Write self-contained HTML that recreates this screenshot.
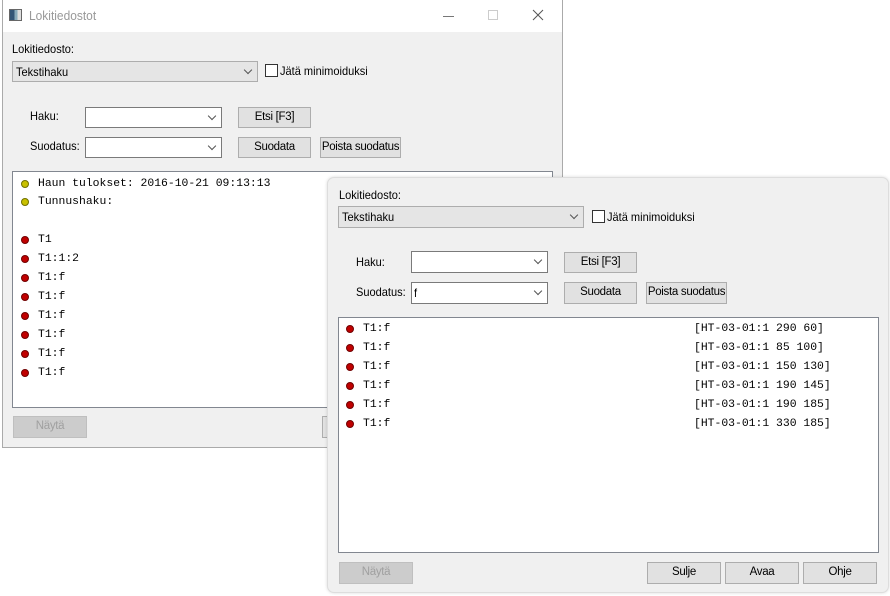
<!DOCTYPE html><html><head><style>
*{margin:0;padding:0;box-sizing:border-box}
body{width:890px;height:596px;background:#fff;position:relative;overflow:hidden;font-family:"Liberation Sans",sans-serif;font-size:12px;color:#000}
.a{position:absolute}
.t{position:absolute;white-space:nowrap;line-height:14px;transform:scaleX(.92);transform-origin:left}
.cb{position:absolute;background:#e5e5e5;border:1px solid #adadad}
.ed{position:absolute;background:#fff;border:1px solid #7a7a7a}
.btn{position:absolute;background:#e1e1e1;border:1px solid #adadad;text-align:center;line-height:19px;white-space:nowrap;font-size:11.5px;letter-spacing:-.3px}
.dis{background:#ccc;border-color:#bfbfbf;color:#a0a0a0}
.chev{position:absolute;right:6px;top:5px;width:6px;height:6px;border-right:1px solid #555;border-bottom:1px solid #555;transform:rotate(45deg)}
.chk{position:absolute;width:13px;height:13px;border:1px solid #333;background:#fff}
.m{position:absolute;font-family:"Liberation Mono",monospace;font-size:11.4px;white-space:pre;line-height:14px}
.dy,.dr{position:absolute;width:8px;height:8px;border-radius:50%}
.dy{background:#c8c000;border:1px solid #707000}
.dr{background:#c00000;border:1px solid #700000}
</style></head><body>
<!-- window 1 -->
<div class="a" style="left:2px;top:0;width:561px;height:448px;background:#f0f0f0;border:1px solid #aaa"></div>
<div class="a" style="left:3px;top:0;width:559px;height:32px;background:#fff"></div>
<div class="a" style="left:9px;top:9px;width:13px;height:12px;border:1px solid #666;background:linear-gradient(90deg,#357 0 40%,#8ab 40% 70%,#ddd 70%)"></div>
<div class="t" style="left:29px;top:9px;color:#999;font-size:13px">Lokitiedostot</div>
<div class="a" style="left:443px;top:16px;width:11px;height:1px;background:#777"></div>
<div class="a" style="left:488px;top:10px;width:10px;height:10px;border:1px solid #ccc"></div>
<svg class="a" style="left:532px;top:9px" width="12" height="12"><path d="M1 1L11 11M11 1L1 11" stroke="#555" stroke-width="1"/></svg>
<div class="t" style="left:12px;top:42px">Lokitiedosto:</div>
<div class="cb" style="left:12px;top:61px;width:246px;height:21px"><div class="t" style="left:3px;top:3px">Tekstihaku</div><div class="chev"></div></div>
<div class="chk" style="left:265px;top:64px"></div><div class="t" style="left:280px;top:64px">Jätä minimoiduksi</div>
<div class="t" style="left:30px;top:109px">Haku:</div>
<div class="ed" style="left:85px;top:107px;width:137px;height:21px"><div class="chev"></div></div>
<div class="btn" style="left:238px;top:107px;width:73px;height:21px">Etsi [F3]</div>
<div class="t" style="left:30px;top:139px">Suodatus:</div>
<div class="ed" style="left:85px;top:137px;width:137px;height:21px"><div class="chev"></div></div>
<div class="btn" style="left:238px;top:137px;width:73px;height:21px">Suodata</div>
<div class="btn" style="left:320px;top:137px;width:81px;height:21px">Poista suodatus</div>
<div class="a" style="left:12px;top:171px;width:541px;height:237px;background:#fff;border:1px solid #828790"></div>
<div class="dy" style="left:21px;top:180px"></div><div class="m" style="left:38px;top:177px">Haun tulokset: 2016-10-21 09:13:13</div>
<div class="dy" style="left:21px;top:198px"></div><div class="m" style="left:38px;top:195px">Tunnushaku:</div>
<div class="dr" style="left:21px;top:236px"></div><div class="m" style="left:38px;top:233px">T1</div>
<div class="dr" style="left:21px;top:255px"></div><div class="m" style="left:38px;top:252px">T1:1:2</div>
<div class="dr" style="left:21px;top:274px"></div><div class="m" style="left:38px;top:271px">T1:f</div>
<div class="dr" style="left:21px;top:293px"></div><div class="m" style="left:38px;top:290px">T1:f</div>
<div class="dr" style="left:21px;top:312px"></div><div class="m" style="left:38px;top:309px">T1:f</div>
<div class="dr" style="left:21px;top:331px"></div><div class="m" style="left:38px;top:328px">T1:f</div>
<div class="dr" style="left:21px;top:350px"></div><div class="m" style="left:38px;top:347px">T1:f</div>
<div class="dr" style="left:21px;top:369px"></div><div class="m" style="left:38px;top:366px">T1:f</div>
<div class="btn dis" style="left:13px;top:416px;width:74px;height:22px">Näytä</div>
<div class="btn" style="left:322px;top:416px;width:20px;height:22px"></div>
<!-- window 2 -->
<div class="a" style="left:327px;top:177px;width:562px;height:416px;background:#f0f0f0;border:1px solid #ddd;border-radius:7px;box-shadow:0 0 3px rgba(0,0,0,.15)"></div>
<div class="t" style="left:339px;top:188px">Lokitiedosto:</div>
<div class="cb" style="left:338px;top:206px;width:246px;height:22px"><div class="t" style="left:3px;top:3px">Tekstihaku</div><div class="chev"></div></div>
<div class="chk" style="left:592px;top:210px"></div><div class="t" style="left:607px;top:210px">Jätä minimoiduksi</div>
<div class="t" style="left:356px;top:255px">Haku:</div>
<div class="ed" style="left:411px;top:251px;width:137px;height:22px"><div class="chev"></div></div>
<div class="btn" style="left:564px;top:252px;width:73px;height:21px">Etsi [F3]</div>
<div class="t" style="left:356px;top:285px">Suodatus:</div>
<div class="ed" style="left:411px;top:282px;width:137px;height:22px"><div class="t" style="left:2px;top:3px">f</div><div class="chev"></div></div>
<div class="btn" style="left:564px;top:282px;width:73px;height:22px">Suodata</div>
<div class="btn" style="left:646px;top:282px;width:81px;height:22px">Poista suodatus</div>
<div class="a" style="left:338px;top:317px;width:541px;height:236px;background:#fff;border:1px solid #828790"></div>
<div class="dr" style="left:346px;top:325px"></div><div class="m" style="left:363px;top:322px">T1:f</div><div class="m" style="left:694px;top:322px">[HT-03-01:1 290 60]</div>
<div class="dr" style="left:346px;top:344px"></div><div class="m" style="left:363px;top:341px">T1:f</div><div class="m" style="left:694px;top:341px">[HT-03-01:1 85 100]</div>
<div class="dr" style="left:346px;top:363px"></div><div class="m" style="left:363px;top:360px">T1:f</div><div class="m" style="left:694px;top:360px">[HT-03-01:1 150 130]</div>
<div class="dr" style="left:346px;top:382px"></div><div class="m" style="left:363px;top:379px">T1:f</div><div class="m" style="left:694px;top:379px">[HT-03-01:1 190 145]</div>
<div class="dr" style="left:346px;top:401px"></div><div class="m" style="left:363px;top:398px">T1:f</div><div class="m" style="left:694px;top:398px">[HT-03-01:1 190 185]</div>
<div class="dr" style="left:346px;top:420px"></div><div class="m" style="left:363px;top:417px">T1:f</div><div class="m" style="left:694px;top:417px">[HT-03-01:1 330 185]</div>
<div class="btn dis" style="left:339px;top:562px;width:74px;height:22px">Näytä</div>
<div class="btn" style="left:647px;top:562px;width:74px;height:22px">Sulje</div>
<div class="btn" style="left:725px;top:562px;width:74px;height:22px">Avaa</div>
<div class="btn" style="left:803px;top:562px;width:74px;height:22px">Ohje</div>
</body></html>
